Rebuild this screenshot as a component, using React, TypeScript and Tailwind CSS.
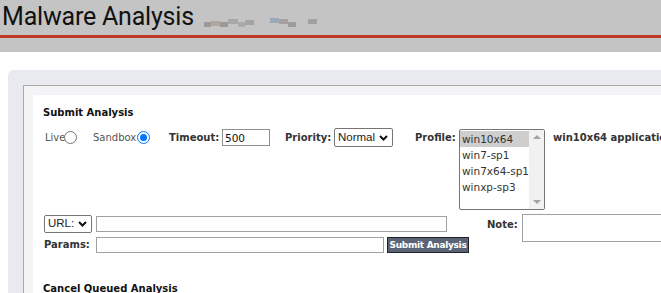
import * as React from 'react';

const verdana = "font-['DejaVu_Sans','Verdana',sans-serif]";
const arial = "font-['Liberation_Sans','Arial',sans-serif]";

const Radio: React.FC<{ checked?: boolean }> = ({ checked }) => (
  <span
    className={`inline-flex h-[13px] w-[13px] shrink-0 items-center justify-center rounded-full border ${
      checked ? 'border-[#0075ff] bg-white' : 'border-[#767676] bg-white'
    }`}
  >
    {checked && <span className="h-[7px] w-[7px] rounded-full bg-[#0075ff]" />}
  </span>
);

const Chevron: React.FC = () => (
  <svg width="9" height="6" viewBox="0 0 9 6" className="shrink-0">
    <path d="M1 1l3.5 3.5L8 1" fill="none" stroke="#111" strokeWidth="2" />
  </svg>
);

const ProfileList: React.FC = () => {
  const profiles = ['win10x64', 'win7-sp1', 'win7x64-sp1', 'winxp-sp3'];
  return (
    <div className="mt-[1px] flex h-[81px] w-[86px] shrink-0 rounded-[2px] border border-[#767676] bg-white">
      <div className="flex-1 pt-[1px]">
        {profiles.map((p, i) => (
          <div
            key={p}
            className={`h-[16px] pl-[2px] leading-[16px] text-[10.5px] text-[#333] ${i === 0 ? 'bg-[#cecece]' : ''}`}
          >
            {p}
          </div>
        ))}
      </div>
      <div className="flex w-[17px] flex-col items-center justify-between bg-[#f1f1f1] py-[5px]">
        <span className="h-0 w-0 border-x-[4px] border-b-[4px] border-x-transparent border-b-[#a3a3a3]" />
        <span className="h-0 w-0 border-x-[4px] border-t-[4px] border-x-transparent border-t-[#a3a3a3]" />
      </div>
    </div>
  );
};

const Redacted: React.FC = () => {
  const blocks = [
    ['w-[7px]', 'bg-[#9a9a9a]', 'mt-[6px]'],
    ['w-[9px]', 'bg-[#b0a8a0]', 'mt-[5px]'],
    ['w-[8px]', 'bg-[#a09890]', 'mt-[6px]'],
    ['w-[10px]', 'bg-[#a8a8a8]', 'mt-[3px]'],
    ['w-[7px]', 'bg-[#b0aaa4]', 'mt-[6px]'],
    ['w-[9px]', 'bg-[#a4a4a4]', 'mt-[4px]'],
    ['w-[16px]', 'bg-[#c3c3c3]', 'mt-[6px]'],
    ['w-[9px]', 'bg-[#9aa8b8]', 'mt-[2px]'],
    ['w-[9px]', 'bg-[#a8a0a0]', 'mt-[3px]'],
    ['w-[8px]', 'bg-[#9c9c9c]', 'mt-[6px]'],
    ['w-[12px]', 'bg-[#c3c3c3]', 'mt-[6px]'],
    ['w-[9px]', 'bg-[#a0a0a0]', 'mt-[3px]'],
  ];
  return (
    <div className="ml-[10px] mt-[16px] flex h-[12px] blur-[0.6px]">
      {blocks.map(([w, bg, mt], i) => (
        <span key={i} className={`${w} ${bg} ${mt} h-[5px]`} />
      ))}
    </div>
  );
};

export default function App() {
  return (
    <div className={`h-[293px] w-[661px] overflow-hidden bg-white ${verdana} text-[10px] text-[#333]`}>
      <header className="h-[52px] bg-[#c4c4c4]">
        <div className="flex h-[38px] border-b-[3px] border-[#c0392b]">
          <h1 className="ml-[2px] mt-[2px] font-['Roboto',sans-serif] text-[25px] leading-[30px] tracking-[-0.2px] text-[#111]">
            Malware Analysis
          </h1>
          <Redacted />
        </div>
      </header>

      <div className="ml-[8px] mt-[18px] w-[700px] rounded-[6px] bg-[#e8eaf0] pl-[15px] pt-[15px]">
        <div className="border-l border-t border-[#a8a8a8] bg-[#f4f4f6] pl-[9px] pt-[9px]">
          <div className="bg-white pb-[20px] pl-[10px] pt-[11px]">
            <div className="font-bold leading-[14px] text-[#111]">Submit Analysis</div>

            <div className="mt-[8px] flex items-start whitespace-nowrap">
              <div className="flex h-[19px] items-center">
                <span className="ml-[2px] w-[19px] text-[#555]">Live</span>
                <Radio />
                <span className="ml-[16px] w-[44px] text-[#555]">Sandbox</span>
                <Radio checked />
              </div>
              <div className="ml-[19px] flex h-[19px] items-center">
                <span className="w-[53px] font-bold">Timeout:</span>
                <input
                  readOnly
                  value="500"
                  className={`h-[17px] w-[48px] border border-[#8f8f8f] px-[2px] text-[10.5px] text-[#111] outline-none ${verdana}`}
                />
              </div>
              <div className="ml-[15px] flex h-[19px] items-center">
                <span className="w-[49px] font-bold">Priority:</span>
                <div
                  className={`flex h-[19px] w-[59px] items-center justify-between rounded-[2px] border border-[#767676] pl-[3px] pr-[4px] ${arial} text-[11.5px] text-[#222]`}
                >
                  Normal
                  <Chevron />
                </div>
              </div>
              <div className="ml-[22px] flex">
                <span className="flex h-[19px] w-[44px] items-center font-bold">Profile:</span>
                <ProfileList />
                <span className="ml-[8px] flex h-[19px] items-center font-bold">win10x64 applications</span>
              </div>
            </div>

            <div className="mt-[5px] flex items-start whitespace-nowrap">
              <div className="w-[426px] shrink-0">
                <div className="flex h-[18px] items-center">
                  <div
                    className={`ml-[1px] flex h-[18px] w-[48px] shrink-0 items-center justify-between rounded-[2px] border border-[#767676] pl-[3px] pr-[4px] ${arial} text-[11.5px] text-[#222]`}
                  >
                    URL:
                    <Chevron />
                  </div>
                  <input readOnly className="ml-[4px] h-[16px] w-[351px] shrink-0 border border-[#a0a0a0] outline-none" />
                </div>
                <div className="mt-[3px] flex h-[17px] items-center">
                  <span className="ml-[1px] w-[52px] shrink-0 font-bold">Params:</span>
                  <input readOnly className="h-[16px] w-[288px] shrink-0 border border-[#a0a0a0] outline-none" />
                  <button
                    className={`ml-[3px] h-[16px] w-[82px] shrink-0 whitespace-nowrap border border-[#222] bg-[#5b6477] px-0 text-[9px] font-bold leading-[14px] tracking-[-0.3px] text-white ${verdana}`}
                  >
                    Submit Analysis
                  </button>
                </div>
              </div>
              <div className="ml-[18px] flex items-start">
                <span className="mt-[2px] w-[35px] font-bold">Note:</span>
                <textarea readOnly className="-mt-[1px] h-[28px] w-[160px] resize-none border border-[#a0a0a0] outline-none" />
              </div>
            </div>

            <div className="mt-[29px] font-bold leading-[14px] text-[#111]">Cancel Queued Analysis</div>
          </div>
        </div>
      </div>
    </div>
  );
}
